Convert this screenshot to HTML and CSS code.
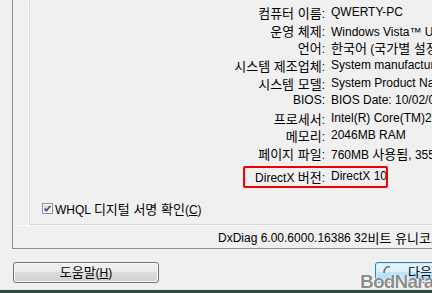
FILE: index.html
```html
<!DOCTYPE html>
<html lang="ko">
<head>
<meta charset="utf-8">
<link rel="stylesheet" href="styles.css">
</head>
<body>
<div class="screen">
  <div class="tab">
    <div class="group">
      <div class="info">
        <div class="row"><span class="lbl"><span class="ko">컴퓨터 이름</span>:</span><span class="val">QWERTY-PC</span></div>
        <div class="row"><span class="lbl"><span class="ko">운영 체제</span>:</span><span class="val">Windows Vista™ Ultimate (6.0, <span class="ko">빌드</span> 6000)</span></div>
        <div class="row"><span class="lbl"><span class="ko">언어</span>:</span><span class="val"><span class="ko">한국어</span> (<span class="ko">국가별 설정</span>: <span class="ko">한국어</span>)</span></div>
        <div class="row"><span class="lbl"><span class="ko">시스템 제조업체</span>:</span><span class="val">System manufacturer</span></div>
        <div class="row"><span class="lbl"><span class="ko">시스템 모델</span>:</span><span class="val">System Product Name</span></div>
        <div class="row"><span class="lbl">BIOS:</span><span class="val">BIOS Date: 10/02/07 14:19:32 Ver: 08.00.12</span></div>
        <div class="row"><span class="lbl"><span class="ko">프로세서</span>:</span><span class="val">Intel(R) Core(TM)2 CPU 6600 @ 2.40GHz</span></div>
        <div class="row"><span class="lbl"><span class="ko">메모리</span>:</span><span class="val">2046MB RAM</span></div>
        <div class="row"><span class="lbl"><span class="ko">페이지 파일</span>:</span><span class="val">760MB <span class="ko">사용됨</span>, 3555MB <span class="ko">사용 가능</span></span></div>
        <div class="row dx"><span class="lbl">DirectX <span class="ko">버전</span>:</span><span class="val">DirectX 10</span></div>
      </div>
      <div class="mark"></div>
      <div class="check">
        <svg class="box" width="11" height="11" viewBox="0 0 11 11">
          <defs>
            <linearGradient id="cb" x1="0" y1="0" x2="1" y2="1">
              <stop offset="0" stop-color="#cfd3d8"/>
              <stop offset="1" stop-color="#f6f6f6"/>
            </linearGradient>
          </defs>
          <rect x="0.5" y="0.5" width="10" height="10" fill="#fff" stroke="#8e8f8f"/>
          <rect x="2" y="2" width="7" height="7" fill="url(#cb)"/>
          <path d="M2.6 5.6 L4.4 7.8 L8.4 2.8" fill="none" stroke="#3a4f8f" stroke-width="1.6"/>
        </svg>
        <span>WHQL <span class="ko">디지털 서명 확인</span>(<u>C</u>)</span>
      </div>
    </div>
    <div class="status">DxDiag 6.00.6000.16386 32<span class="ko">비트 유니코드</span></div>
  </div>
  <div class="buttons">
    <button class="btn"><span class="ko">도움말</span>(<u>H</u>)</button>
    <button class="btn default"><span class="ko">다음 페이지</span>(<u>N</u>)</button>
  </div>
  <div class="frame"></div>
  <div class="watermark">
    <svg class="swoosh" width="8" height="9" viewBox="0 0 8 9"><path d="M1 8 C1 3 4 1 7 2" fill="none" stroke="#6f6f6f" stroke-width="1.6"/></svg>
    <span class="wm-text">BodNara</span>
  </div>
</div>
</body>
</html>
```

FILE: styles.css
```css
html, body {
  margin: 0;
  padding: 0;
}

body {
  width: 432px;
  height: 293px;
  overflow: hidden;
  background: #f0f0f0;
  color: #000;
  font: 12px "Liberation Sans", "Noto Sans CJK KR", sans-serif;
}

.ko {
  font-family: "Noto Sans CJK KR", sans-serif;
  font-size: 13px;
}

.screen {
  position: relative;
  display: flex;
  flex-direction: column;
  height: 293px;
  overflow: hidden;
}

.tab {
  flex: none;
  height: 249px;
  box-sizing: border-box;
  margin-left: 12px;
  border-left: 1px solid #8d8f92;
  border-bottom: 1px solid #8d8f92;
  display: flex;
  flex-direction: column;
}

.group {
  flex: none;
  position: relative;
  height: 225px;
  box-sizing: border-box;
  margin-left: 16px;
  padding-top: 4px;
  border-left: 1px solid #d6d8da;
  border-bottom: 1px solid #d6d8da;
  box-shadow: -1px 1px 0 #fbfbfb;
  display: flex;
  flex-direction: column;
}

.info {
  display: flex;
  flex-direction: column;
}

.row {
  display: grid;
  grid-template-columns: 295px 1fr;
  column-gap: 6px;
  height: 17.65px;
  line-height: 17.65px;
  white-space: nowrap;
}

.lbl {
  text-align: right;
}

.val {
  overflow: hidden;
}

.row.dx {
  margin-top: 5.5px;
}

.mark {
  position: absolute;
  left: 213px;
  top: 166px;
  width: 145px;
  height: 22px;
  box-sizing: border-box;
  border: 2px solid #f00000;
  border-radius: 2px;
}

.check {
  margin-top: auto;
  margin-bottom: 7px;
  padding-left: 12px;
  height: 18px;
  display: flex;
  align-items: center;
  gap: 2px;
  white-space: nowrap;
}

.box {
  flex: none;
  display: block;
}

.status {
  flex: 1;
  display: flex;
  align-items: center;
  padding-left: 205px;
  padding-top: 1px;
  white-space: nowrap;
  border-top: 1px solid #fbfbfb;
}

.buttons {
  flex: none;
  display: flex;
  gap: 216px;
  padding-left: 13px;
  margin-top: 13px;
}

.btn {
  flex: none;
  width: 146px;
  height: 21px;
  padding: 0;
  box-sizing: border-box;
  border: 1px solid #707070;
  border-radius: 3px;
  background: linear-gradient(#f2f2f2 0%, #ebebeb 50%, #dddddd 50%, #cfcfcf 100%);
  box-shadow: inset 0 0 0 1px #fbfbfb;
  color: #000;
  font: 12px "Liberation Sans", "Noto Sans CJK KR", sans-serif;
  line-height: 17px;
  text-align: center;
  white-space: nowrap;
}

.btn.default {
  border-color: #3c7fb1;
  background: linear-gradient(#eaf6fd 0%, #d9f0fc 50%, #bee6fd 50%, #a7d9f5 100%);
  box-shadow: inset 0 0 0 1px #c8ecfd;
}

.frame {
  flex: none;
  margin-top: auto;
  height: 3px;
  border-top: 1px solid #e3e8e5;
  background: #2f4d43;
}

.watermark {
  position: absolute;
  left: 360px;
  bottom: 2px;
  width: 72px;
  height: 18px;
  overflow: visible;
}

.wm-text {
  display: block;
  font-family: "Liberation Sans", sans-serif;
  font-weight: bold;
  font-size: 19px;
  line-height: 18px;
  letter-spacing: -0.8px;
  white-space: nowrap;
  color: rgba(120, 120, 120, 0.85);
  text-shadow: 0 0 1px #fff, 1px 0 0 #fff, -1px 0 0 #fff;
}

.swoosh {
  position: absolute;
  left: 23px;
  top: -8px;
}
```
